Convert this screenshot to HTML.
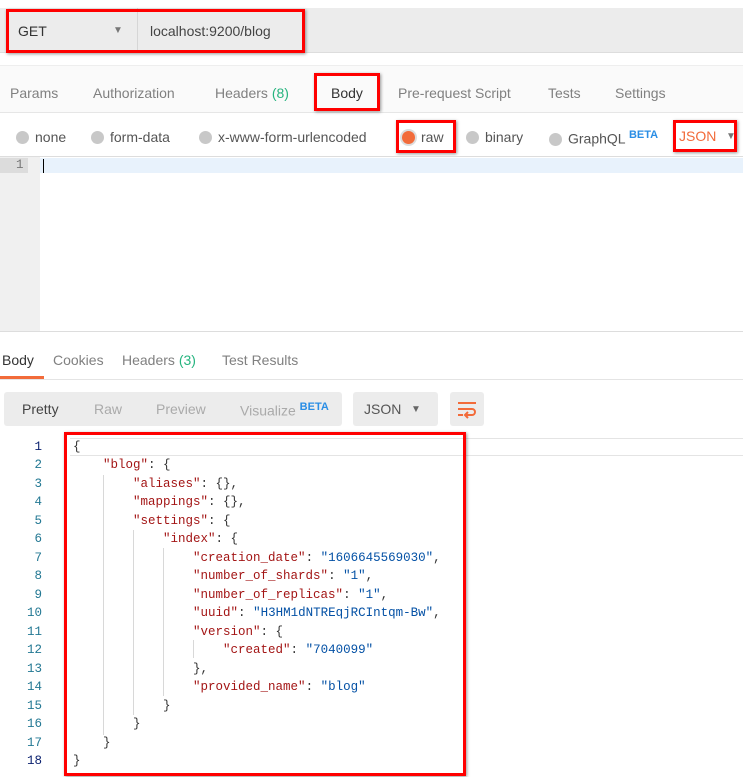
<!DOCTYPE html><html><head><style>
*{margin:0;padding:0;box-sizing:border-box}
body{width:743px;height:777px;background:#fff;font-family:"Liberation Sans",sans-serif;position:relative;overflow:hidden}
.a{position:absolute;white-space:nowrap}
.rb{position:absolute;border:3px solid #f00;box-shadow:1px 1px 3px rgba(0,0,0,.4)}
.t{font-size:14px;color:#808080}
.rad{display:inline-block;width:13px;height:13px;border-radius:50%;background:#c8c8c8;vertical-align:-2px;margin-right:6px}
.code{font-family:"Liberation Mono",monospace;font-size:12.5px}
.ln{position:absolute;left:0;width:42px;text-align:right;color:#237893;font-family:"Liberation Mono",monospace;font-size:12.5px}
.k{color:#a31515}.s{color:#0451a5}.p{color:#333}
.g{position:absolute;width:1px;background:#d8d8d8}
</style></head><body>
<div class="a" style="left:0;top:8px;width:743px;height:45px;background:#ececec;border-bottom:1px solid #ddd"></div>
<div class="a" style="left:137px;top:8px;width:1px;height:45px;background:#d6d6d6"></div>
<div class="a" style="left:18px;top:23px;font-size:14px;color:#333">GET</div>
<div class="a" style="left:113px;top:25px;font-size:10px;color:#777">▼</div>
<div class="a" style="left:150px;top:23px;font-size:14px;color:#444">localhost:9200/blog</div>
<div class="rb" style="left:6px;top:9px;width:299px;height:44px"></div>
<div class="a" style="left:0;top:65px;width:743px;height:48px;background:#fafafa;border-top:1px solid #eee;border-bottom:1px solid #e6e6e6"></div>
<div class="a t" style="left:10px;top:85px">Params</div>
<div class="a t" style="left:93px;top:85px">Authorization</div>
<div class="a t" style="left:215px;top:85px">Headers <span style="color:#26b47f">(8)</span></div>
<div class="a" style="left:331px;top:85px;font-size:14px;color:#333">Body</div>
<div class="rb" style="left:314px;top:73px;width:66px;height:38px"></div>
<div class="a t" style="left:398px;top:85px">Pre-request Script</div>
<div class="a t" style="left:548px;top:85px">Tests</div>
<div class="a t" style="left:615px;top:85px">Settings</div>
<div class="a t" style="left:16px;top:129px;color:#555"><span class="rad"></span>none</div>
<div class="a t" style="left:91px;top:129px;color:#555"><span class="rad"></span>form-data</div>
<div class="a t" style="left:199px;top:129px;color:#555"><span class="rad"></span>x-www-form-urlencoded</div>
<div class="a t" style="left:402px;top:129px;color:#555"><span class="rad" style="background:#f26b3a;box-shadow:0 0 0 2px #ddd"></span>raw</div>
<div class="rb" style="left:396px;top:120px;width:60px;height:33px"></div>
<div class="a t" style="left:466px;top:129px;color:#555"><span class="rad"></span>binary</div>
<div class="a t" style="left:549px;top:129px;color:#555"><span class="rad"></span>GraphQL <sup style="color:#2a8ee5;font-size:11px;font-weight:bold">BETA</sup></div>
<div class="a" style="left:679px;top:128px;font-size:14px;color:#f26b3a">JSON</div>
<div class="a" style="left:726px;top:131px;font-size:10px;color:#777">▼</div>
<div class="rb" style="left:673px;top:120px;width:64px;height:32px"></div>
<div class="a" style="left:0;top:156px;width:743px;height:1px;background:#ddd"></div>
<div class="a" style="left:0;top:157px;width:40px;height:174px;background:#f0f0f0"></div>
<div class="a" style="left:0;top:158px;width:28px;height:15px;background:#dcdcdc"></div>
<div class="a" style="left:40px;top:158px;width:703px;height:15px;background:#e8f2fc"></div>
<div class="a code" style="left:16px;top:158px;color:#777">1</div>
<div class="a" style="left:43px;top:159px;width:1px;height:14px;background:#000"></div>
<div class="a" style="left:0;top:331px;width:743px;height:1px;background:#ddd"></div>
<div class="a" style="left:2px;top:352px;font-size:14px;color:#333">Body</div>
<div class="a" style="left:0;top:376px;width:44px;height:3px;background:#f26b3a"></div>
<div class="a t" style="left:53px;top:352px">Cookies</div>
<div class="a t" style="left:122px;top:352px">Headers <span style="color:#26b47f">(3)</span></div>
<div class="a t" style="left:222px;top:352px">Test Results</div>
<div class="a" style="left:0;top:379px;width:743px;height:1px;background:#e4e4e4"></div>
<div class="a" style="left:4px;top:392px;width:338px;height:34px;background:#ececec;border-radius:3px"></div>
<div class="a" style="left:22px;top:401px;font-size:14px;color:#444">Pretty</div>
<div class="a t" style="left:94px;top:401px;color:#aaa">Raw</div>
<div class="a t" style="left:156px;top:401px;color:#aaa">Preview</div>
<div class="a t" style="left:240px;top:401px;color:#aaa">Visualize <sup style="color:#2a8ee5;font-size:11px;font-weight:bold">BETA</sup></div>
<div class="a" style="left:353px;top:392px;width:85px;height:34px;background:#ececec;border-radius:3px"></div>
<div class="a" style="left:364px;top:401px;font-size:14px;color:#555">JSON</div>
<div class="a" style="left:411px;top:404px;font-size:10px;color:#666">▼</div>
<div class="a" style="left:450px;top:392px;width:34px;height:34px;background:#ececec;border-radius:3px"></div>
<svg class="a" style="left:457px;top:399px" width="20" height="20" viewBox="0 0 20 20"><path d="M1 4h18M1 10h14a3 3 0 0 1 0 6h-6M11 13l-3 3 3 3M1 16h5" stroke="#f26b3a" stroke-width="2" fill="none"/></svg>
<div class="a" style="left:70px;top:455px;width:673px;height:1px;background:#e4e4e4"></div>
<div class="a" style="left:70px;top:438px;width:673px;height:1px;background:#e4e4e4"></div>
<div class="g" style="left:103px;top:475px;height:260px"></div>
<div class="g" style="left:133px;top:530px;height:185px"></div>
<div class="g" style="left:163px;top:548px;height:148px"></div>
<div class="g" style="left:193px;top:640px;height:18px"></div>
<div class="code" style="position:absolute;left:0;top:438px;line-height:18.47px">
<div class="ln" style="top:0;color:#0b216f">1</div><div class="ln" style="top:18.47px">2</div><div class="ln" style="top:36.94px">3</div><div class="ln" style="top:55.41px">4</div><div class="ln" style="top:73.88px">5</div><div class="ln" style="top:92.35px">6</div><div class="ln" style="top:110.82px">7</div><div class="ln" style="top:129.29px">8</div><div class="ln" style="top:147.76px">9</div><div class="ln" style="top:166.23px">10</div><div class="ln" style="top:184.7px">11</div><div class="ln" style="top:203.17px">12</div><div class="ln" style="top:221.64px">13</div><div class="ln" style="top:240.11px">14</div><div class="ln" style="top:258.58px">15</div><div class="ln" style="top:277.05px">16</div><div class="ln" style="top:295.52px">17</div><div class="ln" style="top:313.99px;color:#0b216f">18</div>
<pre class="p" style="position:absolute;left:73px;top:0;font:inherit;line-height:18.47px;white-space:pre">{
    <span class="k">"blog"</span>: {
        <span class="k">"aliases"</span>: {},
        <span class="k">"mappings"</span>: {},
        <span class="k">"settings"</span>: {
            <span class="k">"index"</span>: {
                <span class="k">"creation_date"</span>: <span class="s">"1606645569030"</span>,
                <span class="k">"number_of_shards"</span>: <span class="s">"1"</span>,
                <span class="k">"number_of_replicas"</span>: <span class="s">"1"</span>,
                <span class="k">"uuid"</span>: <span class="s">"H3HM1dNTREqjRCIntqm-Bw"</span>,
                <span class="k">"version"</span>: {
                    <span class="k">"created"</span>: <span class="s">"7040099"</span>
                },
                <span class="k">"provided_name"</span>: <span class="s">"blog"</span>
            }
        }
    }
}</pre></div>
<div class="rb" style="left:64px;top:432px;width:402px;height:344px"></div>
</body></html>
